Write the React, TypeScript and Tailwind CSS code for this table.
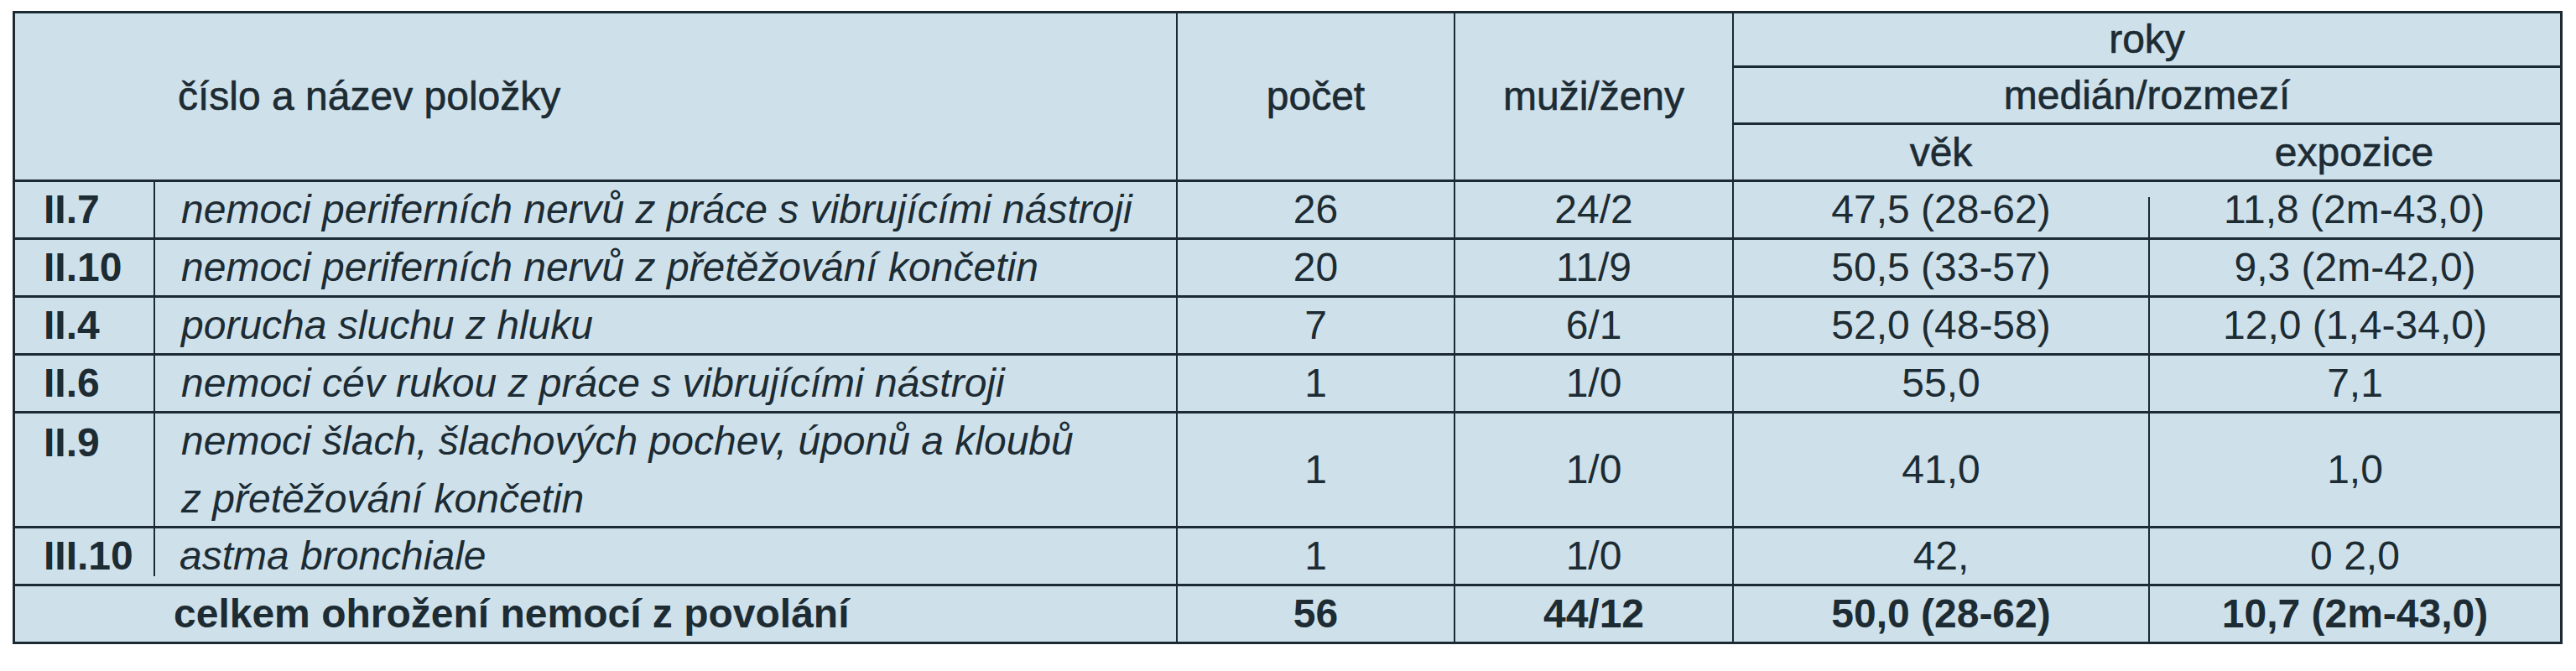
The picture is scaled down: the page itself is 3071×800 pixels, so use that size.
import React from "react";

type Row = {
  code: string;
  name: string[];
  pocet: string;
  mz: string;
  vek: string;
  exp: string;
};

const rows: Row[] = [
  { code: "II.7", name: ["nemoci periferních nervů z práce s vibrujícími nástroji"], pocet: "26", mz: "24/2", vek: "47,5 (28-62)", exp: "11,8 (2m-43,0)" },
  { code: "II.10", name: ["nemoci periferních nervů z přetěžování končetin"], pocet: "20", mz: "11/9", vek: "50,5 (33-57)", exp: "9,3 (2m-42,0)" },
  { code: "II.4", name: ["porucha sluchu z hluku"], pocet: "7", mz: "6/1", vek: "52,0 (48-58)", exp: "12,0 (1,4-34,0)" },
  { code: "II.6", name: ["nemoci cév rukou z práce s vibrujícími nástroji"], pocet: "1", mz: "1/0", vek: "55,0", exp: "7,1" },
  { code: "II.9", name: ["nemoci šlach, šlachových pochev, úponů a kloubů", "z přetěžování končetin"], pocet: "1", mz: "1/0", vek: "41,0", exp: "1,0" },
  { code: "III.10", name: ["astma bronchiale"], pocet: "1", mz: "1/0", vek: "42,", exp: "0 2,0" },
];

function DataRow({ r, i }: { r: Row; i: number }) {
  const tall = r.name.length > 1;
  const first = i === 0;
  const last = i === rows.length - 1;
  return (
    <div className={tall ? "flex h-[137px] border-t-[3px] border-[#1b2a33]" : "flex h-[69px] border-t-[3px] border-[#1b2a33]"}>
      <div className={tall ? "w-[165px] shrink-0 pl-[34px] font-bold leading-[69px]" : "w-[165px] shrink-0 pl-[34px] font-bold flex items-center"}>
        {r.code}
      </div>
      <div
        className={
          last
            ? "relative w-[1219px] shrink-0 pl-[31px] italic flex flex-col justify-center before:absolute before:left-0 before:top-0 before:bottom-[9px] before:w-[2px] before:bg-[#1b2a33]"
            : "w-[1219px] shrink-0 pl-[31px] italic flex flex-col justify-center border-l-[2px] border-[#1b2a33]"
        }
      >
        {r.name.map((n, k) => (
          <div key={k} className={tall ? "leading-[69px]" : "leading-none"}>{n}</div>
        ))}
      </div>
      <div className="w-[331px] shrink-0 border-l-[2px] border-[#1b2a33] flex items-center justify-center">{r.pocet}</div>
      <div className="w-[332px] shrink-0 border-l-[2px] border-[#1b2a33] flex items-center justify-center">{r.mz}</div>
      <div className="w-[496px] shrink-0 border-l-[2px] border-[#1b2a33] flex items-center justify-center">{r.vek}</div>
      <div
        className={
          first
            ? "relative w-[491px] shrink-0 flex items-center justify-center before:absolute before:left-0 before:top-[18px] before:bottom-0 before:w-[2px] before:bg-[#1b2a33]"
            : "w-[491px] shrink-0 border-l-[2px] border-[#1b2a33] flex items-center justify-center"
        }
      >
        {r.exp}
      </div>
    </div>
  );
}

export default function App() {
  return (
    <div className="w-[3071px] h-[800px] bg-white pt-[13px] pl-[15px] font-['Liberation_Sans',Arial,sans-serif] text-[48px] text-[#1d2b33]">
      <div className="w-[3040px] border-[3px] border-[#1b2a33] bg-[#cee1eb]">
        {/* header */}
        <div className="flex h-[198px]">
          <div className="w-[1384px] shrink-0 pl-[194px] flex items-center [-webkit-text-stroke:0.6px_#1d2b33]">
            číslo a název položky
          </div>
          <div className="w-[331px] shrink-0 border-l-[2px] border-[#1b2a33] flex items-center justify-center [-webkit-text-stroke:0.6px_#1d2b33]">
            počet
          </div>
          <div className="w-[332px] shrink-0 border-l-[2px] border-[#1b2a33] flex items-center justify-center [-webkit-text-stroke:0.6px_#1d2b33]">
            muži/ženy
          </div>
          <div className="w-[987px] shrink-0 border-l-[2px] border-[#1b2a33] flex flex-col [-webkit-text-stroke:0.6px_#1d2b33]">
            <div className="h-[62px] flex items-center justify-center">roky</div>
            <div className="h-[68px] border-t-[3px] border-[#1b2a33] flex items-center justify-center">medián/rozmezí</div>
            <div className="h-[68px] border-t-[3px] border-[#1b2a33] flex">
              <div className="w-[494px] flex items-center justify-center">věk</div>
              <div className="w-[491px] flex items-center justify-center">expozice</div>
            </div>
          </div>
        </div>
        {rows.map((r, i) => (
          <DataRow key={r.code} r={r} i={i} />
        ))}
        {/* total */}
        <div className="flex h-[69px] border-t-[3px] border-[#1b2a33] font-bold">
          <div className="w-[165px] shrink-0" />
          <div className="w-[1219px] shrink-0 pl-[24px] flex items-center">celkem ohrožení nemocí z povolání</div>
          <div className="w-[331px] shrink-0 border-l-[2px] border-[#1b2a33] flex items-center justify-center">56</div>
          <div className="w-[332px] shrink-0 border-l-[2px] border-[#1b2a33] flex items-center justify-center">44/12</div>
          <div className="w-[496px] shrink-0 border-l-[2px] border-[#1b2a33] flex items-center justify-center">50,0 (28-62)</div>
          <div className="w-[491px] shrink-0 border-l-[2px] border-[#1b2a33] flex items-center justify-center">10,7 (2m-43,0)</div>
        </div>
      </div>
    </div>
  );
}
